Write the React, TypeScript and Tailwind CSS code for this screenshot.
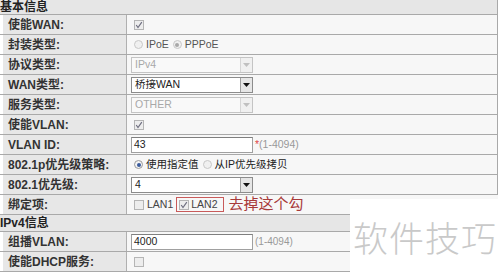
import type { ReactNode } from "react"

const font = { fontFamily: '"Liberation Sans", Arial, "Noto Sans CJK SC", sans-serif' }

function Check({ checked, disabled }: { checked?: boolean; disabled?: boolean }) {
  return (
    <span
      className={`inline-flex items-center justify-center w-[10px] h-[10px] border ${
        disabled ? "border-[#b5b5b5] bg-[#ededed]" : "border-[#8f8f8f] bg-[#f2f2f2]"
      }`}
    >
      {checked && (
        <svg width="8" height="8" viewBox="0 0 8 8">
          <path d="M1.2 4 L3 6.5 L6.8 1.2" fill="none" stroke={disabled ? "#6f6f80" : "#3a3a4a"} strokeWidth="1.2" />
        </svg>
      )}
    </span>
  )
}

function Radio({ checked, disabled }: { checked?: boolean; disabled?: boolean }) {
  return (
    <span
      className={`inline-flex items-center justify-center w-[9px] h-[9px] rounded-full border ${
        disabled ? "border-[#c8c8c8] bg-[#f0f0f0]" : "border-[#9a9a9a] bg-[#f4f4f4]"
      }`}
    >
      {checked && (
        <span className={`w-[4px] h-[4px] rounded-full ${disabled ? "bg-[#a8a8a8]" : "bg-[#3b5c9c]"}`}></span>
      )}
    </span>
  )
}

function Select({ value, disabled }: { value: string; disabled?: boolean }) {
  return (
    <div
      className={`flex items-center w-[122px] h-[16px] border ${
        disabled ? "border-[#c4c4c4] bg-[#f9f9f9] text-[#a8a8a8]" : "border-[#8c8c8c] bg-white text-[#222]"
      }`}
    >
      <span className="flex-1 pl-[3px] leading-none">{value}</span>
      <span
        className={`flex items-center justify-center w-[12px] h-[14px] border-l ${
          disabled ? "border-[#d6d6d6] bg-[#f0f0f0]" : "border-[#a0a0a0] bg-[#e6e6e6]"
        }`}
      >
        <svg width="7" height="4" viewBox="0 0 7 4">
          <path d="M0 0 H7 L3.5 4 Z" fill={disabled ? "#c0c0c0" : "#111"} />
        </svg>
      </span>
    </div>
  )
}

function Row({ label, children }: { label: string; children: ReactNode }) {
  return (
    <div className="flex h-[20px] border-b border-[#a9a9a9]">
      <div className="w-[126px] pl-[2px] flex">
        <div className="flex-1 flex items-center pl-[5px] bg-[#e7e7e7] border-l border-white font-bold text-[#333] text-[12px]">
          {label}
        </div>
      </div>
      <div className="flex-1 flex items-center pl-[4px] bg-[#f7f7f7] border-l border-[#b0b0b0] text-[10.5px] text-[#333]">
        {children}
      </div>
    </div>
  )
}

export default function App() {
  return (
    <div className="relative w-[500px] h-[275px] bg-white overflow-hidden" style={font}>
      <div className="w-[498px] border-r border-[#a9a9a9]">
        {/* 基本信息 */}
        <div className="h-[15px] flex items-center bg-[#e6e6e6] border-b border-[#a9a9a9] font-bold text-[12px] text-[#222]">
          基本信息
        </div>

        <Row label="使能WAN:">
          <span className="pl-[3px] flex"><Check checked disabled /></span>
        </Row>

        <Row label="封装类型:">
          <div className="flex items-center gap-[3px] text-[#555] pl-[3px]">
            <Radio disabled />
            <span className="mr-[1px]">IPoE</span>
            <Radio checked disabled />
            <span>PPPoE</span>
          </div>
        </Row>

        <Row label="协议类型:">
          <Select value="IPv4" disabled />
        </Row>

        <Row label="WAN类型:">
          <Select value="桥接WAN" />
        </Row>

        <Row label="服务类型:">
          <Select value="OTHER" disabled />
        </Row>

        <Row label="使能VLAN:">
          <span className="pl-[3px] flex"><Check checked disabled /></span>
        </Row>

        <Row label="VLAN ID:">
          <div className="flex items-center">
            <div className="w-[122px] h-[16px] border border-[#a0a0a0] border-t-[#7f7f7f] bg-white flex items-center pl-[2px] text-[#222]">
              43
            </div>
            <span className="text-[#e04848] pl-[2px]">*</span>
            <span className="text-[#999]">(1-4094)</span>
          </div>
        </Row>

        <Row label="802.1p优先级策略:">
          <div className="flex items-center gap-[3px] pl-[3px] text-[#222]">
            <Radio checked />
            <span className="mr-[1px]">使用指定值</span>
            <Radio disabled />
            <span>从IP优先级拷贝</span>
          </div>
        </Row>

        <Row label="802.1优先级:">
          <Select value="4" />
        </Row>
      </div>

      <div className="w-[498px]">
        <Row label="绑定项:">
          <div className="flex items-center gap-[3px] pl-[3px] text-[#444]">
            <Check disabled />
            <span>LAN1</span>
            <div className="flex items-center gap-[2px] h-[15px] pl-[2px] pr-[5px] border border-[#c85a5a]">
              <Check checked disabled />
              <span>LAN2</span>
            </div>
            <span className="ml-[2px] text-[15px] text-[#a83a3a]">去掉这个勾</span>
          </div>
        </Row>

        {/* IPv4信息 */}
        <div className="h-[17px] flex items-center bg-[#e6e6e6] border-b border-[#a9a9a9] font-bold text-[12px] text-[#222]">
          IPv4信息
        </div>

        <Row label="组播VLAN:">
          <div className="flex items-center">
            <div className="w-[122px] h-[16px] border border-[#a0a0a0] border-t-[#7f7f7f] bg-white flex items-center pl-[2px] text-[#222]">
              4000
            </div>
            <span className="text-[#999] text-[10px] pl-[2px]">(1-4094)</span>
          </div>
        </Row>

        <Row label="使能DHCP服务:">
          <span className="pl-[3px] flex"><Check disabled /></span>
        </Row>
      </div>

      {/* watermark */}
      <div className="absolute left-[350px] top-[199px] w-[150px] h-[76px] bg-white flex items-center justify-center">
        <span className="text-[35px] text-[#c9c9c9] tracking-[1px]" style={{ fontFamily: '"Noto Sans CJK SC", sans-serif', fontWeight: 300 }}>
          软件技巧
        </span>
      </div>
    </div>
  )
}
